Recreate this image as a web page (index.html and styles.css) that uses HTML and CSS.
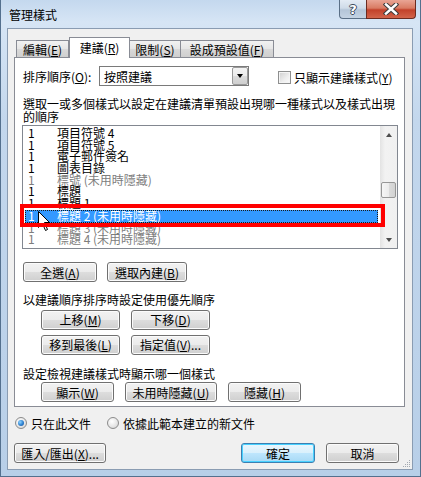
FILE: index.html
```html
<!DOCTYPE html>
<html lang="zh-Hant">
<head>
    <meta charset="UTF-8">
    <title>管理樣式</title>
    <link rel="stylesheet" href="styles.css">
</head>
<body>
    <div class="window">
        <div class="titlebar">
            <span class="title">管理樣式</span>
            <div class="caption-buttons">
                <div class="cap help">?</div>
                <div class="cap close">
                    <svg width="16" height="12" viewBox="0 0 16 12">
                        <path d="M3 1.5 L13 10.5 M13 1.5 L3 10.5" stroke="#3b3b3b" stroke-width="4.5" stroke-linecap="square"/>
                        <path d="M3 1.5 L13 10.5 M13 1.5 L3 10.5" stroke="#fff" stroke-width="2.5" stroke-linecap="square"/>
                    </svg>
                </div>
            </div>
        </div>

        <div class="client">
            <div class="tabs">
                <div class="tab tab-edit">編輯(<u>E</u>)</div>
                <div class="tab tab-active">建議(<u>R</u>)</div>
                <div class="tab tab-limit">限制(<u>S</u>)</div>
                <div class="tab tab-default">設成預設值(<u>F</u>)</div>
            </div>

            <div class="panel">
                <div class="sort-row">
                    <span class="sort-label">排序順序(<u>O</u>):</span>
                    <div class="combo">
                        <span class="combo-text">按照建議</span>
                        <span class="combo-drop"><span class="arrow-down"></span></span>
                    </div>
                    <label class="check">
                        <span class="checkbox"></span>
                        <span>只顯示建議樣式(<u>Y</u>)</span>
                    </label>
                </div>

                <p class="desc">選取一或多個樣式以設定在建議清單預設出現哪一種樣式以及樣式出現的順序</p>

                <div class="listbox">
                    <div class="list-items">
                        <div class="item"><span class="num">1</span><span>項目符號 4</span></div>
                        <div class="item"><span class="num">1</span><span>項目符號 5</span></div>
                        <div class="item"><span class="num">1</span><span>電子郵件簽名</span></div>
                        <div class="item"><span class="num">1</span><span>圖表目錄</span></div>
                        <div class="item dim"><span class="num">1</span><span>標號 (未用時隱藏)</span></div>
                        <div class="item"><span class="num">1</span><span>標題</span></div>
                        <div class="item"><span class="num">1</span><span>標題 1</span></div>
                        <div class="item selected"><span class="num">1</span><span>標題 2 (未用時隱藏)</span></div>
                        <div class="item dim"><span class="num">1</span><span>標題 3 (未用時隱藏)</span></div>
                        <div class="item dim"><span class="num">1</span><span>標題 4 (未用時隱藏)</span></div>
                    </div>
                    <div class="scrollbar">
                        <div class="sb-btn"><span class="sb-up"></span></div>
                        <div class="sb-track"><div class="sb-thumb"></div></div>
                        <div class="sb-btn"><span class="sb-down"></span></div>
                    </div>
                </div>

                <div class="btn-row first-row">
                    <button class="btn w74">全選(<u>A</u>)</button>
                    <button class="btn w80">選取內建(<u>B</u>)</button>
                </div>

                <p class="section-label priority-label">以建議順序排序時設定使用優先順序</p>
                <div class="btn-grid">
                    <button class="btn">上移(<u>M</u>)</button>
                    <button class="btn">下移(<u>D</u>)</button>
                    <button class="btn">移到最後(<u>L</u>)</button>
                    <button class="btn">指定值(<u>V</u>)...</button>
                </div>

                <p class="section-label view-label">設定檢視建議樣式時顯示哪一個樣式</p>
                <div class="btn-row indent">
                    <button class="btn w73">顯示(<u>W</u>)</button>
                    <button class="btn w92">未用時隱藏(<u>U</u>)</button>
                    <button class="btn w73">隱藏(<u>H</u>)</button>
                </div>
            </div>

            <div class="radio-row">
                <label class="radio-opt"><span class="radio checked"></span>只在此文件</label>
                <label class="radio-opt"><span class="radio"></span>依據此範本建立的新文件</label>
            </div>

            <div class="footer">
                <button class="btn w92">匯入/匯出(<u>X</u>)...</button>
                <span class="spacer"></span>
                <button class="btn btn-default w74">確定</button>
                <button class="btn w73">取消</button>
            </div>

            <svg class="grip" width="9" height="9" viewBox="0 0 9 9">
                <g fill="#a3a9b1">
                    <rect x="7" y="1" width="1" height="1"/>
                    <rect x="5" y="3" width="1" height="1"/><rect x="7" y="3" width="1" height="1"/>
                    <rect x="3" y="5" width="1" height="1"/><rect x="5" y="5" width="1" height="1"/><rect x="7" y="5" width="1" height="1"/>
                    <rect x="1" y="7" width="1" height="1"/><rect x="3" y="7" width="1" height="1"/><rect x="5" y="7" width="1" height="1"/><rect x="7" y="7" width="1" height="1"/>
                </g>
            </svg>
        </div>

        <!-- pointer over the selected row -->
        <svg class="cursor" width="13" height="21" viewBox="0 0 13 21">
            <path d="M0.5 0.5 L0.5 16.5 L4.5 12.5 L7.5 19.5 L9.5 18.5 L6.5 11.5 L11.5 11.5 Z" fill="#fff" stroke="#000" stroke-width="1"/>
        </svg>

        <!-- annotation box -->
        <div class="highlight"></div>
    </div>
</body>
</html>
```

FILE: styles.css
```css
* {
    margin: 0;
    padding: 0;
    box-sizing: border-box;
}

body {
    font-family: "Noto Sans CJK TC", "Noto Sans", sans-serif;
    font-size: 12px;
    line-height: 13px;
    color: #000;
    background: #fff;
}

u {
    text-decoration: underline;
    text-underline-offset: 1px;
}

.window {
    position: relative;
    width: 421px;
    height: 477px;
    display: flex;
    flex-direction: column;
    background: linear-gradient(180deg, #c4d8ee 0%, #d6e5f5 22px, #c3d7ed 120px, #b8cfe8 100%);
    border: 1px solid #54708e;
    border-top: none;
}

.titlebar {
    height: 28px;
    display: flex;
    justify-content: space-between;
    align-items: flex-start;
    padding: 8px 4px 0 8px;
}

.title {
    font-size: 12px;
    line-height: 13px;
}

.caption-buttons {
    display: flex;
    margin-top: -8px;
}

.cap {
    height: 19px;
    display: flex;
    align-items: center;
    justify-content: center;
    border: 1px solid #5a6f86;
    border-top: none;
}

.help {
    width: 27px;
    border-radius: 0 0 0 4px;
    border-right: none;
    background: linear-gradient(180deg, #e3ebf4 0%, #cfdbe8 45%, #b4c5d8 55%, #c4d3e3 100%);
    color: #fff;
    font-family: "DejaVu Sans", sans-serif;
    font-weight: bold;
    font-size: 13px;
    text-shadow: 1px 0 #3c4a5c, -1px 0 #3c4a5c, 0 1px #3c4a5c, 0 -1px #3c4a5c;
}

.close {
    width: 50px;
    border-radius: 0 0 4px 0;
    border-color: #6b2b20;
    background: linear-gradient(180deg, #e9a595 0%, #d97b63 45%, #c2412a 55%, #d2644a 100%);
}

.client {
    position: relative;
    flex: 1;
    margin: 0 7px 6px 6px;
    background: #f0f0f0;
    border: 1px solid #8a9cb2;
    padding: 8px 7px 0 6px;
    display: flex;
    flex-direction: column;
}

/* tabs */
.tabs {
    display: flex;
    align-items: flex-end;
    height: 20px;
    padding-left: 2px;
    position: relative;
    z-index: 1;
}

.tab {
    height: 17px;
    border: 1px solid #898c95;
    border-bottom: none;
    background: linear-gradient(180deg, #f2f2f2 0%, #e6e6e6 50%, #d9d9d9 51%, #cfcfcf 100%);
    text-align: center;
    padding-top: 2px;
}

.tab + .tab {
    border-left: none;
}

.tab-edit { width: 53px; }
.tab-limit { width: 51px; }
.tab-default { width: 93px; }

.tab-active {
    width: 61px;
    height: 21px;
    margin-bottom: -1px;
    background: #fff;
    border-left: 1px solid #898c95 !important;
    padding-top: 3px;
}

.tab-active + .tab {
    border-left: none;
}

.panel {
    height: 350px;
    background: #fff;
    border: 1px solid #898c95;
    padding: 8px 8px 0 8px;
}

.sort-row {
    display: flex;
    align-items: center;
    height: 20px;
}

.sort-label {
    width: 76px;
}

.combo {
    width: 150px;
    height: 20px;
    border: 1px solid #7a7a7a;
    display: flex;
    align-items: center;
    justify-content: space-between;
}

.combo-text {
    padding-left: 4px;
}

.combo-drop {
    width: 16px;
    height: 18px;
    border: 1px solid #9a9a9a;
    border-radius: 2px;
    background: linear-gradient(180deg, #f3f3f3 0%, #ebebeb 50%, #dcdcdc 51%, #cfcfcf 100%);
    display: flex;
    align-items: center;
    justify-content: center;
}

.arrow-down {
    border-left: 3.5px solid transparent;
    border-right: 3.5px solid transparent;
    border-top: 4px solid #000;
}

.check {
    display: flex;
    align-items: center;
    gap: 3px;
    margin-left: 29px;
    padding-top: 2px;
}

.checkbox {
    width: 13px;
    height: 13px;
    border: 1px solid #8e8f8f;
    background: linear-gradient(135deg, #cfcfcf 0%, #eeeeee 60%, #fbfbfb 100%);
    box-shadow: inset 0 0 0 1px #f4f4f4;
}

.desc {
    margin-top: 12px;
    width: 373px;
    line-height: 12.5px;
}

/* style list */
.listbox {
    margin-top: 2px;
    margin-left: -1px;
    width: 376px;
    height: 124px;
    border: 1px solid #828790;
    display: flex;
}

.list-items {
    flex: 1;
    padding-top: 1px;
}

.item {
    display: flex;
    height: 11.7px;
    line-height: 11.7px;
    white-space: nowrap;
    padding-left: 5px;
}

.num {
    width: 29px;
}

.item.dim {
    color: #7d7d7d;
}

.item.selected {
    margin: 1px 2px 0 2px;
    height: 12.7px;
    padding-left: 3px;
    background: #3399ff;
    color: #fff;
    outline: 1px dotted #1a1a1a;
    outline-offset: -1px;
}

.item.selected + .item {
    margin-top: -1px;
}

.scrollbar {
    width: 17px;
    display: flex;
    flex-direction: column;
    background: linear-gradient(90deg, #e3e3e3 0%, #f2f2f2 30%, #f0f0f0 100%);
}

.sb-btn {
    height: 17px;
    display: flex;
    align-items: center;
    justify-content: center;
}

.sb-up {
    border-left: 3.5px solid transparent;
    border-right: 3.5px solid transparent;
    border-bottom: 4px solid #4d4d4d;
}

.sb-down {
    border-left: 3.5px solid transparent;
    border-right: 3.5px solid transparent;
    border-top: 4px solid #4d4d4d;
}

.sb-track {
    flex: 1;
    padding-top: 39px;
}

.sb-thumb {
    width: 15px;
    height: 16px;
    margin-left: 1px;
    border: 1px solid #979797;
    border-radius: 2px;
    background: linear-gradient(90deg, #f6f6f6 0%, #ececec 50%, #dcdcdc 51%, #d2d2d2 100%);
}

/* buttons */
.btn {
    height: 20px;
    font-family: inherit;
    font-size: 12px;
    line-height: 13px;
    color: #000;
    border: 1px solid #707070;
    border-radius: 3px;
    background: linear-gradient(180deg, #f2f2f2 0%, #ebebeb 50%, #dddddd 51%, #cfcfcf 100%);
    box-shadow: inset 0 0 0 1px #fbfbfb;
    padding: 0;
}

.w73 { width: 73px; }
.w74 { width: 74px; }
.w80 { width: 80px; }
.w92 { width: 92px; }

.btn-row {
    display: flex;
    gap: 10px;
}

.first-row {
    margin-top: 13px;
}

.section-label {
    line-height: 12.5px;
}

.priority-label {
    margin-top: 12px;
}

.btn-grid {
    margin: 3px 0 0 18px;
    display: grid;
    grid-template-columns: 79px 79px;
    column-gap: 11px;
    row-gap: 5px;
}

.view-label {
    margin-top: 13px;
}

.indent {
    margin: 2px 0 0 18px;
    gap: 11px;
}

/* bottom area */
.radio-row {
    display: flex;
    align-items: center;
    gap: 16px;
    height: 14px;
    margin-top: 9px;
    padding-left: 1px;
}

.radio-opt {
    display: flex;
    align-items: center;
    gap: 4px;
}

.radio {
    width: 12px;
    height: 12px;
    border-radius: 50%;
    border: 1px solid #8b8b8b;
    background: radial-gradient(circle at 40% 35%, #ffffff 0%, #e4e4e4 60%, #cdcdcd 100%);
    display: flex;
    align-items: center;
    justify-content: center;
}

.radio.checked::after {
    content: "";
    width: 6px;
    height: 6px;
    border-radius: 50%;
    background: radial-gradient(circle at 35% 35%, #8fd4ff 0%, #2a7fd0 55%, #1f4f8f 100%);
}

.footer {
    display: flex;
    margin-top: 13px;
    padding-right: 6px;
    gap: 11px;
}

.spacer {
    flex: 1;
}

.btn-default {
    border-color: #3c7fb1;
    box-shadow: inset 0 0 0 1px #48d1ff;
    background: linear-gradient(180deg, #eaf6fd 0%, #d9f0fc 50%, #bee6fd 51%, #a7d9f5 100%);
}

.grip {
    position: absolute;
    right: 1px;
    bottom: 1px;
}

.cursor {
    position: absolute;
    left: 37px;
    top: 211px;
}

.highlight {
    position: absolute;
    left: 19px;
    top: 204px;
    width: 365px;
    height: 23px;
    border: 4px solid #ff0000;
}
```
